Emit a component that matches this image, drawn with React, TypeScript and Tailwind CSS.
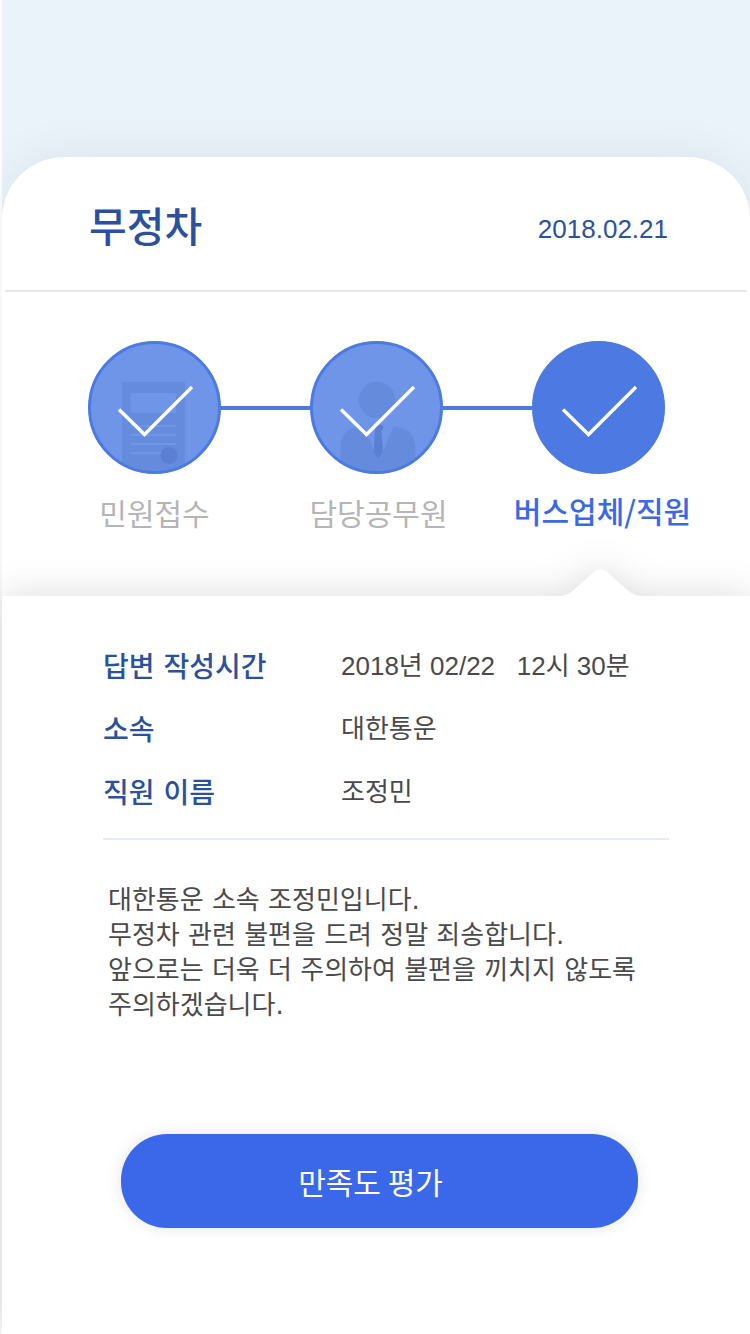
import type { ReactNode } from "react";

function CheckMark() {
  return <path d="M31 68.500L56.500 93.500L104 46" fill="none" stroke="#fff" strokeWidth="3.400" />;
}

function DocumentArt() {
  return (
    <g>
      <rect x="34" y="41" width="63" height="100" rx="1.500" fill="#658bdd" />
      <rect x="42.500" y="52" width="45.500" height="20" rx="2" fill="#6e95e8" />
      <path d="M43 85H88M43 94H88M43 103H88M43 112H78" stroke="#6e95e8" strokeWidth="2" />
      <circle cx="81" cy="114.500" r="8.500" fill="#5b80d3" />
    </g>
  );
}

function OfficerArt() {
  return (
    <g>
      <circle cx="67" cy="59" r="18.300" fill="#658bdd" />
      <path
        d="M30.500 140V112C30.500 98 31 89 51 84.500L54 86L64 110L68 117L73.500 110L83 86.500Q84 84 87 85.500L97 89C103 92 105.500 100 105.500 112V140Z"
        fill="#658bdd"
      />
      <path d="M65 84H71.500Q74 84.500 73 87L71.500 90.500L73 110.500L68 117.500L63.500 110.500L65 90Z" fill="#5b80d3" />
    </g>
  );
}

type StepProps = { id: string; label: string; current?: boolean; art?: ReactNode };

function Step({ id, label, current, art }: StepProps) {
  return (
    <li className="group flex w-[133px] shrink-0 flex-col items-center" aria-current={current ? "step" : undefined}>
      <svg viewBox="0 0 133 133" className="size-[133px]" aria-hidden="true">
        <clipPath id={id}>
          <circle cx="66.500" cy="66.500" r="65" />
        </clipPath>
        <circle cx="66.500" cy="66.500" r="66" fill={current ? "#4c7ae2" : "#6e95e8"} />
        <g clipPath={`url(#${id})`}>{art}</g>
        <circle cx="66.500" cy="66.500" r="65" fill="none" stroke="#4c7ae2" strokeWidth="3" />
        <CheckMark />
      </svg>
      <span
        className={
          current
            ? "mt-[14px] pl-2 text-[30px] leading-11 font-medium whitespace-nowrap text-[#3b68e8]"
            : "mt-4 pl-1 text-[30px] leading-11 whitespace-nowrap text-[#b5b5b5] group-first:pl-0"
        }
      >
        {label}
      </span>
    </li>
  );
}

function Connector() {
  return <li aria-hidden="true" className="mt-[65px] h-1 flex-1 bg-[#4c7ae2]" />;
}

const details = [
  { term: "답변 작성시간", value: "2018년 02/22   12시 30분" },
  { term: "소속", value: "대한통운" },
  { term: "직원 이름", value: "조정민" },
];

export default function App() {
  return (
    <div className="min-h-screen overflow-hidden bg-white pl-0.5 font-['Noto_Sans_CJK_KR','Noto_Sans',sans-serif]">
      <main className="flex min-h-screen flex-col bg-[#ebf3fa] pt-[157px]">
        <article className="flex flex-1 flex-col rounded-t-[62px] bg-white shadow-[0_0_50px_rgba(0,0,0,0.07)]">
          <header className="mr-[3px] ml-[3px] flex h-[135px] items-center justify-between border-b-2 border-[#e8e8e8] pr-[79px] pl-[84px] text-[#2b519e]">
            <h1 className="text-[41px] leading-15 font-medium">무정차</h1>
            <time
              dateTime="2018-02-21"
              className="pt-[10px] font-['Liberation_Sans','Noto_Sans_CJK_KR',sans-serif] text-[26px] leading-10"
            >
              2018.02.21
            </time>
          </header>

          <ol className="flex items-start pt-[49px] pr-[85px] pb-[62px] pl-[86px]">
            <Step id="step-received" label="민원접수" art={<DocumentArt />} />
            <Connector />
            <Step id="step-officer" label="담당공무원" art={<OfficerArt />} />
            <Connector />
            <Step id="step-company" label="버스업체/직원" current />
          </ol>

          <section className="relative flex flex-1 flex-col bg-white px-[81px] pt-[38px] pb-[106px] drop-shadow-[0_0_18px_rgba(0,0,0,0.14)]">
            <svg
              viewBox="0 0 82 28"
              className="absolute -top-[27px] right-[108px] h-7 w-[82px]"
              aria-hidden="true"
            >
              <path d="M0 27C5 27 9 25 13 21.500L35 2Q40.500 -1.500 46 2L68 21.500C72 25 77 27 82 27V28H0Z" fill="#fff" />
            </svg>

            <dl className="ml-5 border-b-2 border-[#e8ebf7] pb-[15px]">
              {details.map(({ term, value }) => (
                <div key={term} className="flex h-[63px] items-center">
                  <dt className="w-[238px] pt-1 font-['DejaVu_Sans','Noto_Sans_CJK_KR',sans-serif] text-[28px] leading-10 font-medium text-[#2b519e]">
                    {term}
                  </dt>
                  <dd className="font-['Liberation_Sans','Noto_Sans_CJK_KR',sans-serif] text-[26px] leading-10 whitespace-pre text-[#4a4a4a]">
                    {value}
                  </dd>
                </div>
              ))}
            </dl>

            <p className="ml-[25px] pt-[43px] font-['DejaVu_Sans','Noto_Sans_CJK_KR',sans-serif] text-[26px] leading-[35px] text-[#4a4a4a]">
              대한통운 소속 조정민입니다.
              <br />
              무정차 관련 불편을 드려 정말 죄송합니다.
              <br />
              앞으로는 더욱 더 주의하여 불편을 끼치지 않도록
              <br />
              주의하겠습니다.
            </p>

            <button
              type="button"
              className="mt-auto mr-[31px] ml-[38px] h-[94px] cursor-pointer rounded-[46px] bg-[#3b68e8] pr-[18px] text-[30px] leading-11 text-white shadow-[0_0_16px_rgba(0,0,0,0.1)]"
            >
              만족도 평가
            </button>
          </section>
        </article>
      </main>
    </div>
  );
}
